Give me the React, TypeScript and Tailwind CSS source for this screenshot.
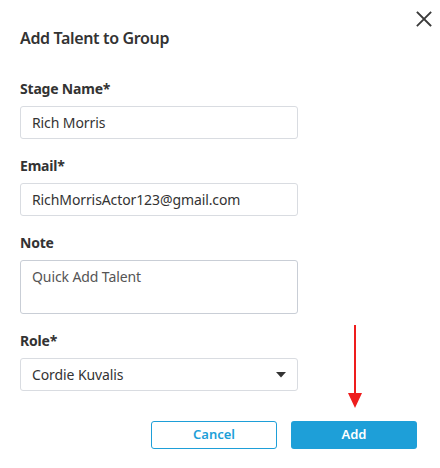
import React from "react";

const font = { fontFamily: '"Noto Sans", "Open Sans", sans-serif' };

function Field({ label, children }: { label: string; children: React.ReactNode }) {
  return (
    <div className="flex flex-col">
      <div className="text-[14px] leading-[20px] font-bold text-[#333333] mb-[7px] tracking-[-0.2px]">{label}</div>
      {children}
    </div>
  );
}

export default function App() {
  return (
    <div className="relative w-[440px] h-[468px] bg-white" style={font}>
      <button className="absolute top-[11px] left-[416px] w-[16px] h-[16px] flex items-center justify-center">
        <svg width="16" height="16" viewBox="0 0 16 16">
          <path d="M1.5 1.5 L14.5 14.5 M14.5 1.5 L1.5 14.5" stroke="#3a3a3a" strokeWidth="1.8" strokeLinecap="square" />
        </svg>
      </button>
      <div className="px-5 pt-[26px]">
        <h1 className="text-[16px] leading-[24px] font-semibold text-[#333333] tracking-[-0.35px]">Add Talent to Group</h1>
        <div className="mt-[29px] flex flex-col gap-[17px] w-[278px]">
          <Field label="Stage Name*">
            <div className="h-[33px] border border-[#d9dce1] rounded-[3px] px-[11px] flex items-center text-[14px] text-[#333333] tracking-[-0.1px]">
              Rich Morris
            </div>
          </Field>
          <Field label="Email*">
            <div className="h-[33px] border border-[#d9dce1] rounded-[3px] px-[11px] flex items-center text-[14px] text-[#333333] tracking-[-0.1px]">
              RichMorrisActor123@gmail.com
            </div>
          </Field>
          <Field label="Note">
            <div className="h-[54px] border border-[#c9ced6] rounded-[3px] px-[11px] pt-[6px] text-[14px] leading-[20px] text-[#555555] tracking-[-0.1px]">
              Quick Add Talent
            </div>
          </Field>
          <Field label="Role*">
            <div className="h-[33px] border border-[#d9dce1] rounded-[3px] pl-[11px] pr-[11px] flex items-center justify-between text-[14px] text-[#333333] tracking-[-0.1px]">
              <span>Cordie Kuvalis</span>
              <svg width="10" height="6" viewBox="0 0 10 6">
                <path d="M0 0 L10 0 L5 5.5 Z" fill="#333333" />
              </svg>
            </div>
          </Field>
        </div>
      </div>
      <div className="flex justify-end gap-[14px] pr-[23px] mt-[30px]">
        <button className="w-[126px] h-[28px] border border-[#1e9fd8] rounded-[3px] text-[#1e9fd8] text-[13px] font-semibold flex items-center justify-center">
          Cancel
        </button>
        <button className="w-[126px] h-[28px] bg-[#1e9fd8] rounded-[3px] text-white text-[13px] font-semibold flex items-center justify-center">
          Add
        </button>
      </div>
      <svg className="absolute left-[347px] top-[325px]" width="16" height="84" viewBox="0 0 16 84">
        <line x1="8" y1="0" x2="8" y2="70" stroke="#ee1d1d" strokeWidth="2" />
        <path d="M1 68 L15 68 L8 83 Z" fill="#ee1d1d" />
      </svg>
    </div>
  );
}
